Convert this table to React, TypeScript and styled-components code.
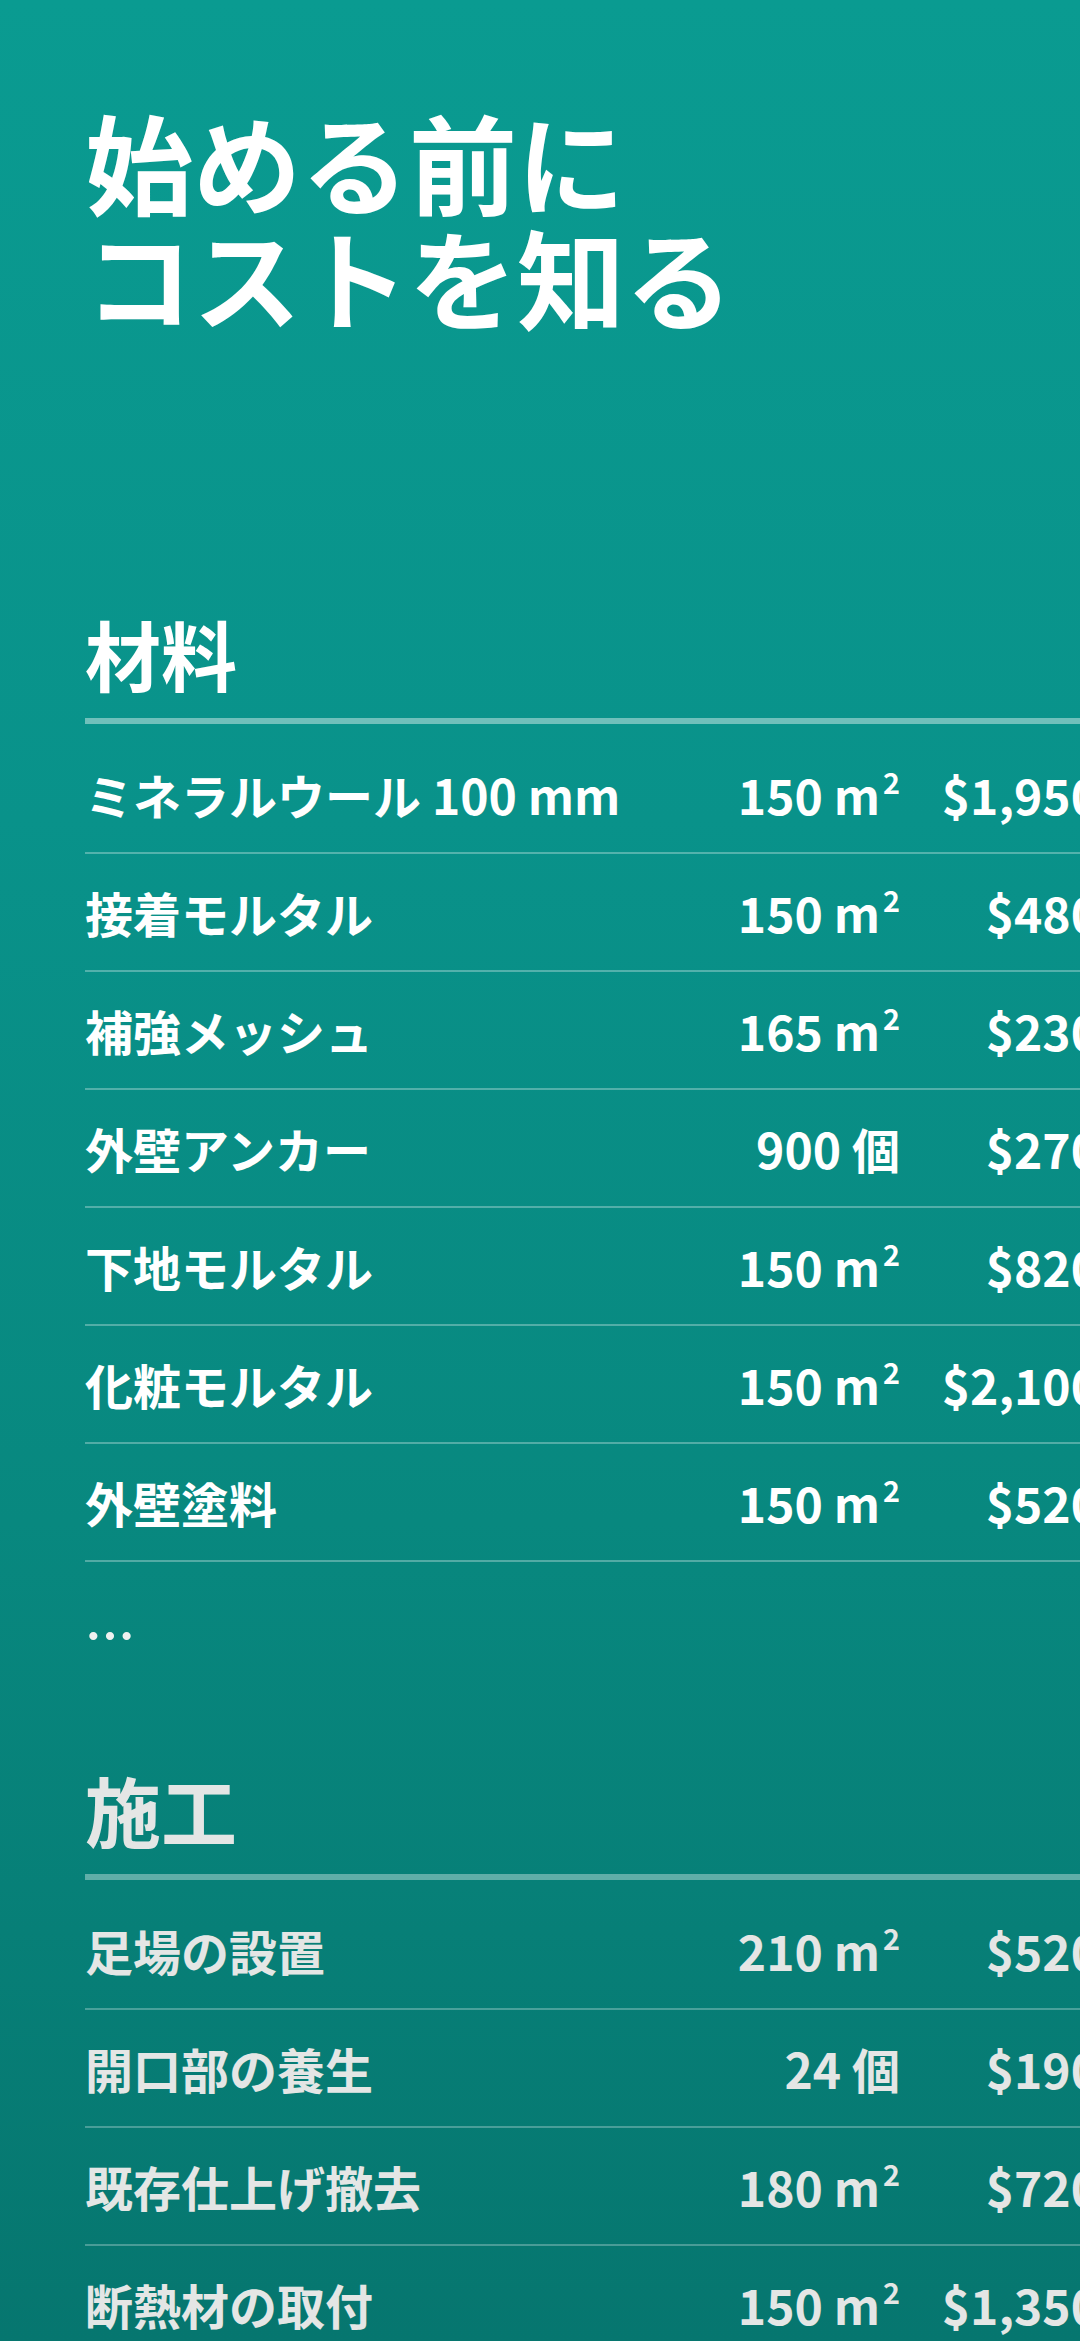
import React from 'react';
import styled, { createGlobalStyle } from 'styled-components';

const GlobalStyle = createGlobalStyle`
  html, body {
    margin: 0;
    padding: 0;
  }

  body {
    background: linear-gradient(180deg, #0a9b91 0%, #09928a 35%, #08887f 65%, #06766f 100%);
    font-family: "Noto Sans CJK JP", "Noto Sans", sans-serif;
    color: #ffffff;
  }
`;

const Page = styled.div`
  box-sizing: border-box;
  display: flex;
  flex-direction: column;
  height: 100vh;
  overflow: hidden;
  padding: 103px 0 0 85px;
`;

const Title = styled.h1`
  margin: 0 0 275px;
  font-size: 108px;
  line-height: 115px;
  font-weight: 700;
`;

const Section = styled.section<{ $muted?: boolean }>`
  flex-shrink: 0;
  width: 1014px;
  margin-bottom: 72px;
  color: ${({ $muted }) => ($muted ? '#e4e6e5' : '#ffffff')};
  --rule: ${({ $muted }) => ($muted ? 'rgba(255, 255, 255, 0.36)' : 'rgba(255, 255, 255, 0.42)')};
  --divider: ${({ $muted }) => ($muted ? 'rgba(255, 255, 255, 0.27)' : 'rgba(255, 255, 255, 0.3)')};
`;

const SectionTitle = styled.h2`
  margin: 0 0 12px;
  font-size: 76px;
  line-height: 90px;
  font-weight: 700;
  padding-bottom: 20px;
  border-bottom: 6px solid var(--rule);
`;

const Row = styled.div`
  display: grid;
  grid-template-columns: 1fr auto 199px;
  align-items: center;
  height: 116px;
  border-bottom: 2px solid var(--divider);
  font-size: 48px;
  font-weight: 700;
  white-space: nowrap;
`;

const Name = styled.span``;

const Qty = styled.span`
  text-align: right;
`;

const Price = styled.span`
  text-align: right;
`;

const Sup = styled.sup`
  font-size: 0.6em;
  line-height: 0;
  vertical-align: 0.72em;
  margin-left: 3px;
`;

const More = styled.div`
  padding-top: 12px;
  font-size: 50px;
  line-height: 118px;
  font-weight: 700;
  color: #eef1f0;
`;

type Item = { name: string; qty: string; unit: 'm2' | 'pcs'; price: string };

const materials: Item[] = [
  { name: 'ミネラルウール 100 mm', qty: '150', unit: 'm2', price: '$1,950' },
  { name: '接着モルタル', qty: '150', unit: 'm2', price: '$480' },
  { name: '補強メッシュ', qty: '165', unit: 'm2', price: '$230' },
  { name: '外壁アンカー', qty: '900', unit: 'pcs', price: '$270' },
  { name: '下地モルタル', qty: '150', unit: 'm2', price: '$820' },
  { name: '化粧モルタル', qty: '150', unit: 'm2', price: '$2,100' },
  { name: '外壁塗料', qty: '150', unit: 'm2', price: '$520' },
];

const works: Item[] = [
  { name: '足場の設置', qty: '210', unit: 'm2', price: '$520' },
  { name: '開口部の養生', qty: '24', unit: 'pcs', price: '$190' },
  { name: '既存仕上げ撤去', qty: '180', unit: 'm2', price: '$720' },
  { name: '断熱材の取付', qty: '150', unit: 'm2', price: '$1,350' },
];

function ItemRow({ item }: { item: Item }) {
  return (
    <Row>
      <Name>{item.name}</Name>
      <Qty>
        {item.qty} {item.unit === 'm2' ? <>m<Sup>2</Sup></> : '個'}
      </Qty>
      <Price>{item.price}</Price>
    </Row>
  );
}

export default function App() {
  return (
    <>
      <GlobalStyle />
      <Page>
        <Title>
          始める前に
          <br />
          コストを知る
        </Title>
        <Section>
          <SectionTitle>材料</SectionTitle>
          {materials.map((item) => <ItemRow key={item.name} item={item} />)}
          <More>…</More>
        </Section>
        <Section $muted>
          <SectionTitle>施工</SectionTitle>
          {works.map((item) => <ItemRow key={item.name} item={item} />)}
        </Section>
      </Page>
    </>
  );
}
